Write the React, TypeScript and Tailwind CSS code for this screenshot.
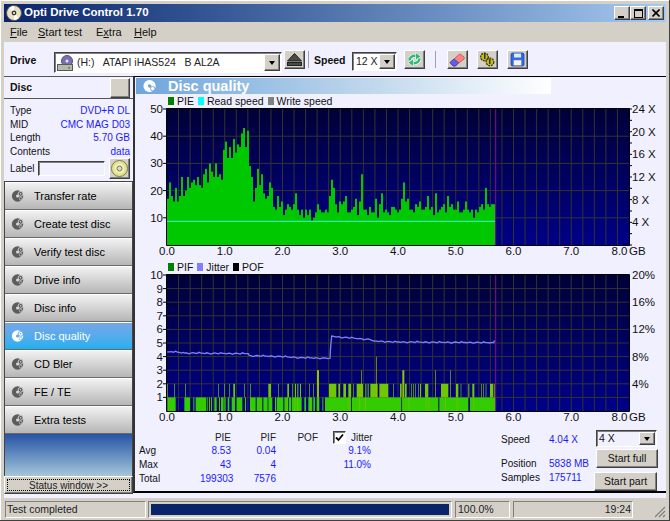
import { ReactNode } from 'react'

const font = "font-['Liberation_Sans',Arial,sans-serif]"

const raised = 'border border-t-white border-l-white border-r-[#404040] border-b-[#404040] bg-[#d4d0c8] shadow-[inset_-1px_-1px_#808080]'
const sunken = 'border border-t-[#404040] border-l-[#404040] border-r-white border-b-white shadow-[inset_1px_1px_#808080]'

// PIE per 2px column, read off the plot
const pie = [
  17, 23, 18, 16, 21, 16, 18, 25, 18, 20, 25, 21, 23, 24, 22, 25, 22, 21, 26, 28, 23, 30, 27, 25, 30, 25, 26, 24, 35, 38,
  32, 36, 32, 39, 34, 37, 36, 41, 43, 36, 42, 29, 25, 16, 21, 28, 22, 26, 19, 17, 18, 23, 21, 14, 13, 18, 14, 16, 11, 13,
  15, 14, 13, 15, 19, 13, 11, 13, 10, 13, 11, 13, 9, 10, 12, 15, 13, 12, 12, 13, 12, 18, 24, 21, 15, 12, 16, 15, 16, 18,
  12, 12, 13, 14, 17, 11, 16, 26, 13, 13, 11, 14, 12, 12, 17, 10, 15, 19, 12, 13, 12, 11, 14, 14, 13, 12, 13, 17, 23, 16,
  17, 13, 13, 12, 15, 14, 16, 13, 13, 14, 18, 13, 14, 11, 19, 12, 13, 14, 15, 12, 18, 14, 15, 13, 13, 16, 12, 12, 13, 16,
  13, 12, 13, 10, 13, 12, 14, 15, 13, 21, 15, 14, 15, 15,
]

// PIF blocks, [from, to] in 1/3 px so they can be read straight from a zoomed crop
const pif1: [number, number][] = [
  [97, 122], [148, 165], [175, 178], [182, 213], [215, 218], [222, 225], [228, 231], [238, 245], [252, 255], [258, 266],
  [268, 272], [278, 283], [290, 300], [305, 322], [330, 333], [345, 362], [365, 382], [385, 398], [400, 412], [425, 445],
  [448, 460], [462, 468], [470, 500], [508, 513], [520, 532], [535, 540], [545, 553], [562, 565], [570, 648], [651, 798],
  [802, 910], [913, 1000], [1005, 1082],
]
const pif2: [number, number, number][] = [
  [97, 99, 2], [118, 120, 2], [151, 153, 2], [250, 252, 2], [268, 270, 2], [283, 285, 2], [295, 300, 2], [327, 329, 2],
  [346, 348, 2], [400, 408, 2], [430, 432, 2], [457, 462, 2], [472, 474, 2], [480, 483, 2], [487, 490, 2], [495, 498, 2],
  [522, 524, 2], [535, 537, 2], [546, 552, 3], [582, 604, 2], [610, 615, 2], [625, 633, 2], [640, 648, 2], [655, 657, 2],
  [665, 684, 2], [678, 680, 3], [690, 692, 2], [695, 697, 2], [700, 702, 2], [705, 707, 2], [708, 728, 2], [723, 725, 4],
  [733, 760, 2], [775, 777, 2], [795, 800, 2], [802, 808, 3], [810, 815, 2], [828, 830, 2], [835, 837, 2], [840, 842, 2],
  [850, 852, 2], [855, 858, 2], [870, 880, 2], [900, 902, 3], [918, 940, 2], [945, 947, 3], [963, 970, 2], [977, 979, 2],
  [1000, 1003, 2], [1012, 1018, 2], [1038, 1040, 2], [1045, 1047, 2], [1052, 1054, 2], [1065, 1075, 2], [1078, 1080, 2],
]
const olive = [420, 455, 478, 486, 525, 548, 640, 672, 690, 800, 820, 872, 880, 930, 965, 1015]

const jitterKeys: [number, number][] = [
  [97, 276], [110, 275], [150, 279], [340, 281], [342, 287], [420, 289], [500, 293], [585, 295], [587, 258], [590, 228],
  [610, 231], [650, 234], [700, 238], [720, 243], [780, 246], [1076, 248],
]

function jitterLine() {
  const pts: string[] = []
  for (let i = 0; i < jitterKeys.length - 1; i++) {
    const [x0, y0] = jitterKeys[i]
    const [x1, y1] = jitterKeys[i + 1]
    const steps = Math.max(1, Math.round((x1 - x0) / 6))
    for (let s = 0; s < steps; s++) {
      const x = x0 + ((x1 - x0) * s) / steps
      const y = y0 + ((y1 - y0) * s) / steps
      const wob = steps > 2 ? [0, 1, -1, 0, 2, 0, -1, 0, 1, -2, 0][Math.floor(x / 6) % 11] : 0
      pts.push(`${(x / 3).toFixed(1)},${(y / 3 - 14 + wob * 0.4).toFixed(1)}`)
    }
  }
  pts.push('358.7,68.7', '359.5,66.5')
  return pts.join(' ')
}

const L = 32
const R = 494
const T = 1
const B = 137

function Plot({ id, rows, minor, left, right, children }: {
  id: string
  rows: number
  minor: number
  left: string[]
  right: string[]
  children: ReactNode
}) {
  const cols = Array.from({ length: 39 }, (_, i) => L + (i + 1) * 11.55)
  const rowYs = Array.from({ length: rows - 1 }, (_, i) => T + ((i + 1) * (B - T)) / rows)
  return (
    <svg width="531" height="150" className="block overflow-visible shrink-0" style={{ fontFamily: 'Liberation Sans, Arial, sans-serif' }}>
      <defs>
        <linearGradient id={id} x1="0" y1="0" x2="0" y2="1">
          <stop offset="0" stopColor="#000038" />
          <stop offset="1" stopColor="#000088" />
        </linearGradient>
      </defs>
      <rect x={L} y={T} width={R - L} height={B - T} fill={`url(#${id})`} />
      {cols.map((x) => <line key={x} x1={x} x2={x} y1={T} y2={B} stroke="#33332f" strokeWidth="1" />)}
      {rowYs.map((y) => <line key={y} x1={L} x2={R} y1={y} y2={y} stroke="#33332f" strokeWidth="1" />)}
      {children}
      <line x1={360.7} x2={360.7} y1={T} y2={B} stroke="#900a88" strokeWidth="1" />
      <path d={`M${L - 0.5} ${T - 0.5}H${R + 0.5}V${B + 0.5}H${L - 0.5}Z`} fill="none" stroke="#000" strokeWidth="1" />
      {left.map((t, i) => {
        const y = T + (i * (B - T)) / left.length
        return (
          <g key={t}>
            <line x1={L - 4} x2={L} y1={y} y2={y} stroke="#000" />
            <text x={L - 4} y={y + 4} textAnchor="end" fontSize="11.5" fill="#111">{t}</text>
          </g>
        )
      })}
      {right.map((t, i) => {
        const y = T + (i * (B - T)) / minor
        return <text key={t} x={R + 3} y={y + 4} fontSize="11.5" fill="#111">{t}</text>
      })}
      {id === 'topbg' && Array.from({ length: 13 }, (_, i) => (
        <line key={i} x1={R} x2={R + 3} y1={T + (i * (B - T)) / 12} y2={T + (i * (B - T)) / 12} stroke="#000" />
      ))}
      {Array.from({ length: 9 }, (_, i) => {
        const x = i === 8 ? 484.5 : L + i * 57.75
        return <text key={i} x={x} y={147} textAnchor="middle" fontSize="11.5" fill="#111">{i}.0</text>
      })}
      <text x={494} y={147} fontSize="11.5" fill="#111">GB</text>
    </svg>
  )
}

function CdIcon({ size = 16 }: { size?: number }) {
  return (
    <svg width={size} height={size} viewBox="0 0 16 16">
      <circle cx="8" cy="8" r="7.5" fill="#e8e2c0" stroke="#57534a" />
      <path d="M8 8 3 3a7 7 0 0 1 5-2zM8 8l5 5a7 7 0 0 1-5 2z" fill="#fff" />
      <circle cx="8" cy="8" r="2.4" fill="#3a3a38" />
      <circle cx="8" cy="8" r="1" fill="#fff" />
    </svg>
  )
}

function NavIcon({ active }: { active?: boolean }) {
  const c = active ? '#fff' : '#5c5c5c'
  const h = active ? '#5aa8e8' : '#d8d8d8'
  return (
    <svg width="14" height="14" viewBox="0 0 16 16">
      <circle cx="7.5" cy="8" r="6.5" fill={c} />
      <circle cx="7.5" cy="8" r="1.8" fill={h} />
      <circle cx="11" cy="5.5" r="2.8" fill={c} stroke={h} strokeWidth="1" />
      <circle cx="11" cy="5.5" r="0.9" fill={h} />
      <circle cx="11" cy="11" r="1.6" fill={c} stroke={h} strokeWidth="0.7" />
    </svg>
  )
}

function ToolButton({ children }: { children: ReactNode }) {
  return <div className={`${raised} w-[21px] h-[19px] flex items-center justify-center`}>{children}</div>
}

function DropArrow() {
  return (
    <div className={`${raised} w-[16px] h-full flex items-center justify-center shrink-0`}>
      <div className="w-0 h-0 border-x-[3.5px] border-x-transparent border-t-[4px] border-t-black" />
    </div>
  )
}

function NavItem({ label, active }: { label: string; active?: boolean }) {
  return (
    <div
      className={`h-[28px] flex items-center pl-[6px] text-[11px] border-t border-t-white border-b border-b-[#6a6a6a] ${
        active ? 'bg-linear-to-b from-[#74a6e6] to-[#1ab0f0] text-white' : 'bg-linear-to-b from-[#f2f2f2] to-[#b6b6b6] text-black'
      }`}
    >
      <NavIcon active={active} />
      <span className="ml-[9px]">{label}</span>
    </div>
  )
}

function InfoRow({ k, v }: { k: string; v: string }) {
  return (
    <div className="h-[13.7px] flex items-center justify-between text-[10px] leading-none">
      <span className="text-[#111]">{k}</span>
      <span className="text-[#1a1aff]">{v}</span>
    </div>
  )
}

function Legend({ items }: { items: [string, string][] }) {
  return (
    <div className="flex items-end h-full pl-[33px] pb-[1px] text-[10.5px] leading-[12px] text-[#111]">
      {items.map(([c, t]) => (
        <span key={t} className="flex items-center mr-[4px]">
          <span className={`w-[6px] h-[8px] mr-[3px] ${c}`} />
          {t}
        </span>
      ))}
    </div>
  )
}

function StatRow({ k, a, b, c }: { k: string; a: string; b: string; c?: string }) {
  return (
    <div className="flex h-[14px] items-center">
      <span className="w-[61px] text-[#111]">{k}</span>
      <span className="w-[31px] text-right text-[#1a1aff]">{a}</span>
      <span className="w-[45px] text-right text-[#1a1aff]">{b}</span>
      <span className="w-[95px] text-right text-[#1a1aff]">{c}</span>
    </div>
  )
}

export default function App() {
  return (
    <div className={`${font} w-[670px] h-[521px] flex flex-col bg-[#d4d0c8] pt-[4px] px-[4px] pb-[3px] overflow-hidden shadow-[inset_-1px_-1px_#404040,inset_1px_1px_#fff]`}>
      {/* title bar */}
      <div className="h-[18px] flex items-center bg-linear-to-r from-[#0a246a] to-[#a6caf0] pl-[2px] pr-[2px] shrink-0">
        <CdIcon />
        <span className="ml-[2px] text-white font-bold text-[11.5px]">Opti Drive Control 1.70</span>
        <div className="ml-auto flex">
          {['min', 'max'].map((b) => (
            <div key={b} className={`${raised} w-[16px] h-[14px] flex items-center justify-center`}>
              {b === 'min' ? (
                <div className="w-[6px] h-[2px] bg-black mt-[7px] -ml-[2px]" />
              ) : (
                <div className="w-[9px] h-[9px] border border-black border-t-2" />
              )}
            </div>
          ))}
          <div className={`${raised} w-[16px] h-[14px] ml-[2px] flex items-center justify-center`}>
            <svg width="8" height="8" viewBox="0 0 8 8"><path d="M0.5 0.5 7.5 7.5M7.5 0.5 0.5 7.5" stroke="#000" strokeWidth="1.6" /></svg>
          </div>
        </div>
      </div>

      {/* menu */}
      <div className="h-[20px] flex items-center pl-[6px] text-[11px] text-[#111] shrink-0">
        <span className="w-[28px]"><u>F</u>ile</span>
        <span className="w-[58px]"><u>S</u>tart test</span>
        <span className="w-[38px]">E<u>x</u>tra</span>
        <span><u>H</u>elp</span>
      </div>

      {/* toolbar */}
      <div className="h-[34px] bg-[#f0f0ff] flex items-start shrink-0">
        <span className="ml-[6px] w-[28px] mt-[11px] text-[10.5px] font-bold leading-[14px] text-[#111]">Drive</span>
        <div className={`${sunken} ml-[16px] mt-[10px] w-[228px] h-[21px] bg-white flex items-center pr-[1px] py-[1px]`}>
          <svg width="17" height="16" viewBox="0 0 17 16" className="ml-[2px]">
            <circle cx="10" cy="6" r="5.5" fill="#7a6fb0" stroke="#55507a" />
            <circle cx="10" cy="6" r="1.5" fill="#e8e8f8" />
            <rect x="0.5" y="9.5" width="15" height="6" fill="#b8b8b0" stroke="#5a5a55" />
            <rect x="11" y="12" width="2" height="1.5" fill="#30a030" />
          </svg>
          <span className="ml-[3px] text-[10.5px] text-[#222] whitespace-pre">(H:)   ATAPI iHAS524   B AL2A</span>
          <div className="ml-auto h-full"><DropArrow /></div>
        </div>
        <div className="ml-[2px] mt-[8px]">
          <ToolButton>
            <svg width="15" height="13" viewBox="0 0 15 13">
              <path d="M7.5 0.5 14.5 8H0.5Z" fill="#4a4a48" stroke="#222" />
              <rect x="0.5" y="9.5" width="14" height="3" fill="#4a4a48" stroke="#222" />
            </svg>
          </ToolButton>
        </div>
        <div className="ml-[3px] mt-[9px] w-[1px] h-[17px] bg-[#a0a0a8]" />
        <span className="ml-[5px] w-[32px] mt-[11px] text-[10.5px] font-bold leading-[14px] text-[#111]">Speed</span>
        <div className={`${sunken} ml-[6px] mt-[10px] w-[45px] h-[19px] bg-white flex items-center text-[10.5px] text-[#222] py-[1px] pr-[1px]`}>
          <span className="ml-[3px] whitespace-nowrap">12 X</span>
          <div className="ml-auto h-full"><DropArrow /></div>
        </div>
        <div className="ml-[7px] mt-[8px]">
          <ToolButton>
            <svg width="17" height="15" viewBox="0 0 17 15">
              <g id="arr">
                <path d="M3.500 8.500C3.500 5 6.500 3.500 10 3.800" fill="none" stroke="#fff" strokeWidth="3.600" />
                <path d="M3.500 8.500C3.500 5 6.500 3.500 10 3.800" fill="none" stroke="#2fb878" strokeWidth="2.400" />
                <path d="M9.500 0.500 15 4.500 9.500 8Z" fill="#2fb878" stroke="#fff" strokeWidth="0.600" />
              </g>
              <g transform="rotate(180 8.500 7.500)">
                <path d="M3.500 8.500C3.500 5 6.500 3.500 10 3.800" fill="none" stroke="#fff" strokeWidth="3.600" />
                <path d="M3.500 8.500C3.500 5 6.500 3.500 10 3.800" fill="none" stroke="#2fb878" strokeWidth="2.400" />
                <path d="M9.500 0.500 15 4.500 9.500 8Z" fill="#2fb878" stroke="#fff" strokeWidth="0.600" />
              </g>
            </svg>
          </ToolButton>
        </div>
        <div className="ml-[10px] mt-[9px] w-[1px] h-[17px] bg-[#a0a0a8]" />
        <div className="ml-[11px] mt-[8px]">
          <ToolButton>
            <svg width="17" height="15" viewBox="0 0 17 15">
              <path d="M1 10.500 10 2.500a1.500 1.500 0 0 1 2 0l3 2.500a1.500 1.500 0 0 1 0 2L6.500 14H4Z" fill="#ff8080" stroke="#a04040" strokeWidth="0.6" />
              <path d="M1 10.500 5 7l4.500 3.500-3 3.500H4Z" fill="#5a60ee" stroke="#303090" strokeWidth="0.6" />
            </svg>
          </ToolButton>
        </div>
        <div className="ml-[9px] mt-[8px]">
          <ToolButton>
            <svg width="17" height="15" viewBox="0 0 17 15">
              <circle cx="5.500" cy="5" r="3.800" fill="#c8c000" stroke="#333" strokeWidth="1.300" strokeDasharray="2 0.800" />
              <circle cx="11" cy="10" r="3.800" fill="#c8c000" stroke="#333" strokeWidth="1.300" strokeDasharray="2 0.800" />
              <rect x="5" y="1" width="1.500" height="6" fill="#333" />
              <rect x="10" y="7" width="1.500" height="5" fill="#333" />
            </svg>
          </ToolButton>
        </div>
        <div className="ml-[9px] mt-[8px]">
          <ToolButton>
            <svg width="15" height="15" viewBox="0 0 15 15">
              <path d="M1 2.500A1.500 1.500 0 0 1 2.500 1H13l1 1v10.500a1.500 1.500 0 0 1-1.500 1.500h-10A1.500 1.500 0 0 1 1 12.500Z" fill="#2a6cf0" stroke="#1a3ca0" strokeWidth="0.7" />
              <rect x="4" y="1.500" width="7" height="4" fill="#e0e8ff" />
              <rect x="3.500" y="8" width="8" height="5.500" fill="#f4f4ff" stroke="#777" strokeWidth="0.5" />
            </svg>
          </ToolButton>
        </div>
      </div>

      {/* body */}
      <div className="flex-1 flex flex-col bg-[#f0f0ff] min-h-0">
        <div className="flex h-[422px] shrink-0">
          {/* left panel */}
          <div className="w-[129px] h-[418px] shrink-0 flex flex-col">
            <div className="h-[23px] border-y border-[#555] bg-[#f0f0ff] flex items-center pl-[6px]">
              <span className="text-[10.5px] font-bold text-[#111]">Disc</span>
              <div className={`${raised} ml-auto mr-[3px] w-[20px] h-[20px]`} />
            </div>
            <div className="pl-[6px] pr-[3px] pt-[5px] h-[82px]">
              <InfoRow k="Type" v="DVD+R DL" />
              <InfoRow k="MID" v="CMC MAG D03" />
              <InfoRow k="Length" v="5.70 GB" />
              <InfoRow k="Contents" v="data" />
              <div className="flex items-center text-[10px] text-[#111] -mt-[1px] h-[22px]">
                <span className="w-[28px]">Label</span>
                <div className={`${sunken} w-[67px] h-[15px] bg-[#f0f0ff]`} />
                <div className={`${raised} ml-[4px] w-[21px] h-[21px] flex items-center justify-center`}>
                  <svg width="17" height="17" viewBox="0 0 17 17">
                    <circle cx="8.500" cy="8.500" r="8" fill="#e4e48c" stroke="#77775a" />
                    <circle cx="8.500" cy="8.500" r="5" fill="#f2f2b8" />
                    <circle cx="8.500" cy="8.500" r="2.500" fill="#d8d8d0" stroke="#77775a" />
                  </svg>
                </div>
              </div>
            </div>
            <div className="flex-1 flex flex-col border-t border-[#444] border-x border-x-[#444]">
              <NavItem label="Transfer rate" />
              <NavItem label="Create test disc" />
              <NavItem label="Verify test disc" />
              <NavItem label="Drive info" />
              <NavItem label="Disc info" />
              <NavItem label="Disc quality" active />
              <NavItem label="CD Bler" />
              <NavItem label="FE / TE" />
              <NavItem label="Extra tests" />
              <div className="flex-1 bg-linear-to-b from-[#2753a3] to-[#a5c6da]" />
              <div className={`${raised} h-[18px] p-[2px] -mx-[1px]`}>
                <div className="h-full border border-dotted border-black flex items-center justify-center text-[10px] text-[#222]">
                  Status window &gt;&gt;
                </div>
              </div>
            </div>
          </div>

          {/* main */}
          <div className="flex-1 border-t border-t-black border-l-2 border-l-[#333] border-b-2 border-b-black h-[417px] flex flex-col">
            <div className="h-[16px] mt-[1px] w-[415px] ml-[1px] bg-linear-to-r from-[#6fa5dc] via-[#b6d2ea] to-white flex items-center pl-[7px] shrink-0">
              <svg width="14" height="14" viewBox="0 0 16 16">
                <circle cx="7.500" cy="8" r="7" fill="#fff" />
                <circle cx="7.500" cy="8" r="2" fill="#6fa5dc" />
                <circle cx="11" cy="11" r="2.500" fill="#fff" stroke="#6fa5dc" />
              </svg>
              <span className="ml-[11px] text-white font-bold text-[14.5px] leading-none">Disc quality</span>
            </div>
            <div className="h-[14px] shrink-0">
              <Legend items={[['bg-[#008000]', 'PIE'], ['bg-[#00ffff]', 'Read speed'], ['bg-[#808080]', 'Write speed']]} />
            </div>
            <Plot id="topbg" rows={5} minor={6} left={['50', '40', '30', '20', '10']} right={['24 X', '20 X', '16 X', '12 X', '8 X', '4 X']}>
              {pie.map((v, i) => (
                <rect key={i} x={L + i * 2} y={B - v * 2.72} width="2" height={v * 2.72} fill="#00c800" />
              ))}
              <line x1={L} x2={360} y1={113.3} y2={113.3} stroke="#3cf5c8" strokeWidth="1" />
            </Plot>
            <div className="h-[16px] shrink-0">
              <Legend items={[['bg-[#008000]', 'PIF'], ['bg-[#8080ff]', 'Jitter'], ['bg-black', 'POF']]} />
            </div>
            <Plot id="botbg" rows={10} minor={5} left={['10', '9', '8', '7', '6', '5', '4', '3', '2', '1']} right={['20%', '16%', '12%', '8%', '4%']}>
              {pif1.map(([a, b]) => (
                <rect key={a} x={a / 3} y={B - 13.6} width={(b - a) / 3} height="13.6" fill="#33cc00" />
              ))}
              {olive.map((a) => (
                <rect key={a} x={a / 3} y={B - 13.6} width="1" height="13.6" fill="#66c400" />
              ))}
              {pif2.map(([a, b, h]) => (
                <rect
                  key={`${a}-${h}`}
                  x={a / 3}
                  y={B - h * 13.6}
                  width={(b - a) / 3}
                  height={(h - 1) * 13.6}
                  fill={h === 2 ? '#70c800' : h === 3 ? '#96c000' : '#b0b800'}
                />
              ))}
              <polyline points={jitterLine()} fill="none" stroke="#8080ff" strokeWidth="1.3" />
            </Plot>

            {/* stats */}
            <div className="flex-1 flex text-[10px] leading-none pl-[4px]">
              <div className="w-[236px] pt-[7px]">
                <div className="flex h-[13px] items-center text-[#222]">
                  <span className="w-[61px]" />
                  <span className="w-[31px] text-right">PIE</span>
                  <span className="w-[45px] text-right">PIF</span>
                  <span className="w-[42px] text-right">POF</span>
                  <span className={`${sunken} ml-[15px] w-[13px] h-[13px] bg-white flex items-center justify-center shrink-0`}>
                    <svg width="9" height="9" viewBox="0 0 9 9"><path d="M1 4.500 3.500 7 8 1.500" fill="none" stroke="#000" strokeWidth="1.800" /></svg>
                  </span>
                  <span className="ml-[5px]">Jitter</span>
                </div>
                <div>
                  <StatRow k="Avg" a="8.53" b="0.04" c="9.1%" />
                  <StatRow k="Max" a="43" b="4" c="11.0%" />
                  <StatRow k="Total" a="199303" b="7576" />
                </div>
              </div>
              <div className="ml-[126px] w-[95px] text-[#111] pt-[9px]">
                <div className="flex h-[14px] items-center"><span className="w-[48px]">Speed</span><span className="text-[#1a1aff]">4.04 X</span></div>
                <div className="flex h-[14px] items-center mt-[10px]"><span className="w-[48px]">Position</span><span className="text-[#1a1aff]">5838 MB</span></div>
                <div className="flex h-[14px] items-center"><span className="w-[48px]">Samples</span><span className="text-[#1a1aff]">175711</span></div>
              </div>
              <div className="pt-[6px] w-[64px] text-[10.5px] text-[#111]">
                <div className={`${sunken} w-[61px] h-[17px] bg-[#f0f0ff] flex items-center py-[1px] pr-[1px]`}>
                  <span className="ml-[2px]">4 X</span>
                  <div className="ml-auto h-full"><DropArrow /></div>
                </div>
                <div className={`${raised} w-[62px] h-[19px] mt-[2px] flex items-center justify-center`}>Start full</div>
                <div className={`${raised} w-[63px] h-[19px] mt-[4px] -ml-[2px] flex items-center justify-center`}>Start part</div>
              </div>
            </div>
          </div>
        </div>
      </div>

      {/* status bar */}
      <div className="h-[20px] pt-[3px] flex items-stretch bg-[#d4d0c8] text-[10.5px] text-[#222] shrink-0">
        <div className="w-[141px] ml-[1px] border border-t-[#808080] border-l-[#808080] border-r-white border-b-white pl-[1px] flex items-center">Test completed</div>
        <div className="w-[304px] ml-[2px] border border-t-[#808080] border-l-[#808080] border-r-white border-b-white p-[2px]">
          <div className="h-full bg-[#0a246a]" />
        </div>
        <div className="w-[55px] ml-[3px] border border-t-[#808080] border-l-[#808080] border-r-white border-b-white pl-[2px] flex items-center">100.0%</div>
        <div className="w-[120px] ml-[3px] border border-t-[#808080] border-l-[#808080] border-r-white border-b-white pr-[1px] flex items-center justify-end">19:24</div>
        <div className="flex-1 flex items-end justify-end">
          <svg width="13" height="13" viewBox="0 0 13 13">
            <path d="M12 2 2 12M12 6 6 12M12 10 10 12" stroke="#808080" strokeWidth="1.200" />
          </svg>
        </div>
      </div>
    </div>
  )
}
